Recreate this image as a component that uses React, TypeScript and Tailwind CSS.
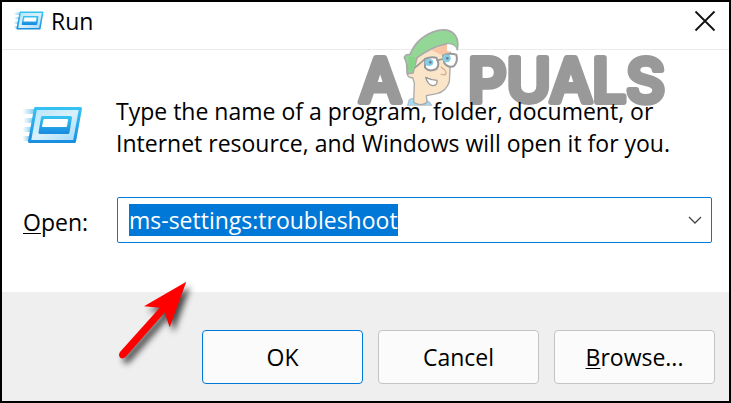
import { useEffect, useRef, useState } from 'react';

const RunIcon = ({ id, className }: { id: string; className: string }) => (
  <svg viewBox="0 0 60 38" className={className} aria-hidden="true">
    <defs>
      <linearGradient id={`${id}-frame`} x1="0" y1="0" x2="0" y2="1">
        <stop offset="0" stopColor="#35c1f1" />
        <stop offset="1" stopColor="#1a8fe0" />
      </linearGradient>
      <linearGradient id={`${id}-panel`} x1="0" y1="0" x2="1" y2="1">
        <stop offset="0" stopColor="#b5e4fa" />
        <stop offset="0.5" stopColor="#d9f0fc" />
        <stop offset="1" stopColor="#9fd8f7" />
      </linearGradient>
      <linearGradient id={`${id}-speed`} x1="0" y1="0" x2="1" y2="0">
        <stop offset="0" stopColor="#9fd8f2" stopOpacity="0.1" />
        <stop offset="1" stopColor="#8accec" />
      </linearGradient>
    </defs>
    <g fill={`url(#${id}-speed)`}>
      <rect x="0" y="3" width="11" height="5" />
      <rect x="1" y="12" width="9" height="5" />
      <rect x="0" y="21" width="8" height="5" />
      <rect x="0" y="30" width="6" height="5" />
    </g>
    <path
      d="M12.5 2.5H57.5L51.5 35.5H6.5Z"
      fill={`url(#${id}-panel)`}
      stroke={`url(#${id}-frame)`}
      strokeWidth="3"
      strokeLinejoin="round"
    />
    <path
      d="M19.5 11.5H47.5L45 26.5H17Z"
      fill={`url(#${id}-frame)`}
      stroke={`url(#${id}-frame)`}
      strokeWidth="3"
      strokeLinejoin="round"
    />
    <path d="M21 13.5H44.5L43.5 20.5H19.5Z" fill="#fff" stroke="#fff" strokeLinejoin="round" />
  </svg>
);

const Watermark = () => (
  <svg viewBox="0 0 330 100" className="w-[330px] h-[100px] overflow-visible" role="img" aria-label="Appuals">
    <g
      fill="#999"
      stroke="#999"
      strokeWidth="6"
      strokeLinejoin="round"
      fontFamily="Inter, sans-serif"
      fontWeight="500"
      fontSize="60"
    >
      <text x="0" y="72">A</text>
      <text x="109" y="72">PUALS</text>
    </g>
    <g transform="translate(38 -15) scale(0.3334)" strokeLinejoin="round" strokeLinecap="round">
      <path d="M32 270L36 254Q44 246 55 253L80 262Q92 248 104 270Z" fill="#9edcf5" stroke="#aaa" strokeWidth="2" />
      <path
        d="M30 176L28 140L62 108L150 84L160 104L160 145L157 200Q148 228 120 236L88 242L90 262Q74 276 50 262L52 205L47 188Q34 190 30 176Z"
        fill="#fbe5c8"
        stroke="#aaa"
        strokeWidth="4"
      />
      <path d="M104 106L150 86L158 112L138 122Z" fill="#f8c4a4" />
      <path
        d="M22 128Q24 118 39 118Q62 62 124 46Q158 40 174 60Q186 76 181 104Q172 86 150 86Q104 96 60 128L52 158L48 174L32 176Q34 150 22 128Z"
        fill="#92d795"
        stroke="#aaa"
        strokeWidth="5"
      />
      <path d="M150 88Q168 86 178 100L170 112L150 108Z" fill="#fff" />
      <path d="M34 126H54V158L46 170L34 166Z" fill="#86d289" />
      <path d="M54 158L82 134" fill="none" stroke="#999" strokeWidth="5" />
      <path d="M84 132Q100 124 118 128Q130 148 118 162Q96 172 84 158Z" fill="#fff" stroke="#999" strokeWidth="6" />
      <path d="M138 122Q156 112 178 119Q184 140 170 154Q150 158 142 144Z" fill="#fff" stroke="#999" strokeWidth="6" />
      <path d="M120 136L138 132" stroke="#999" strokeWidth="5" />
      <ellipse cx="96" cy="142" rx="13" ry="11" fill="#83cde5" />
      <ellipse cx="149" cy="130" rx="12" ry="12" fill="#83cde5" />
      <circle cx="100" cy="142" r="4" fill="#778" />
      <circle cx="151" cy="130" r="4" fill="#778" />
      <path d="M132 156Q156 172 142 180L132 178" fill="none" stroke="#c9a58c" strokeWidth="3" />
      <path d="M86 187Q104 196 120 196Q122 212 106 212Q92 208 86 187Z" fill="#fff" stroke="#999" strokeWidth="4" />
    </g>
  </svg>
);

const PointerArrow = () => (
  <svg viewBox="0 0 80 90" className="w-[80px] h-[90px] drop-shadow-[4px_5px_3px_rgba(0,0,0,0.7)]" aria-hidden="true">
    <path
      d="M71.3 4.7L54.7 50.3L49.7 35.5L10.5 80Q7.5 82.5 5 80.5Q3 78 5 75L44.7 30.7L29 29.2Z"
      fill="#f00"
    />
  </svg>
);

const buttonBase = 'w-[161px] h-[54px] rounded border bg-[#fbfbfb] text-[23px] leading-8 hover:bg-[#f0f6fc]';

const App = () => {
  const [command, setCommand] = useState('ms-settings:troubleshoot');
  const inputRef = useRef<HTMLInputElement>(null);

  useEffect(() => {
    inputRef.current?.focus();
    inputRef.current?.select();
  }, []);

  return (
    <div className="min-h-screen flex flex-col border-2 border-black bg-white text-black font-['Open_Sans',sans-serif]">
      {/* Title bar */}
      <header className="h-12 flex items-center justify-between border-b border-[#ebebeb] pl-3 pr-[13px] pb-[10px]">
        <div className="flex items-center gap-[7px]">
          <RunIcon id="title" className="w-[30px] h-[19px]" />
          <h1 className="text-[23px] leading-8">Run</h1>
        </div>
        <button type="button" aria-label="Close">
          <svg viewBox="0 0 22 22" className="w-[22px] h-[22px]" fill="none" stroke="#111" strokeWidth="1.8">
            <path d="M1.5 1.5L20.5 20.5M20.5 1.5L1.5 20.5" />
          </svg>
        </button>
      </header>

      <form className="flex-1 flex flex-col" onSubmit={e => e.preventDefault()}>
        {/* Body */}
        <div className="relative flex-1 pl-[21px] pr-[17px] pt-[45px]">
          <div className="absolute right-[40px] -top-[20px]">
            <Watermark />
          </div>

          <div className="relative flex items-start">
            <RunIcon id="body" className="w-[60px] h-[38px] mt-[11px] mr-[33px] shrink-0" />
            <p className="text-[23px] leading-8">
              Type the name of a program, folder, document, or
              <br />
              Internet resource, and Windows will open it for you.
            </p>
          </div>

          <div className="relative flex items-center mt-[38px]">
            <label htmlFor="command" className="w-[94px] shrink-0 pt-1 text-[23px] leading-8">
              <span className="underline underline-offset-2 decoration-1">O</span>pen:
            </label>
            <div className="flex-1 h-[46px] flex items-center rounded-xs border border-[#0078d7] pl-[11px] pr-2">
              <input
                id="command"
                ref={inputRef}
                type="text"
                value={command}
                onChange={e => setCommand(e.target.value)}
                className="flex-1 min-w-0 h-8 text-[23px] leading-8 outline-none selection:bg-[#0078d7] selection:text-white"
              />
              <button type="button" aria-label="Show recent commands">
                <svg viewBox="0 0 16 10" className="w-4 h-[10px]" fill="none" stroke="#444" strokeWidth="1.3">
                  <path d="M2 2L8 8L14 2" />
                </svg>
              </button>
            </div>
          </div>

          <div className="absolute left-[113px] top-[227px] z-10 pointer-events-none">
            <PointerArrow />
          </div>
        </div>

        {/* Buttons */}
        <div className="flex justify-end gap-[15px] bg-[#efefef] pt-[38px] pb-[17px] pr-[14px]">
          <button type="submit" className={`${buttonBase} border-[#0078d7]`}>OK</button>
          <button type="button" className={`${buttonBase} border-[#c4c4c4]`}>Cancel</button>
          <button type="button" className={`${buttonBase} border-[#c4c4c4]`}>
            <span className="underline underline-offset-2 decoration-1">B</span>rowse...
          </button>
        </div>
      </form>
    </div>
  );
};

export default App;
